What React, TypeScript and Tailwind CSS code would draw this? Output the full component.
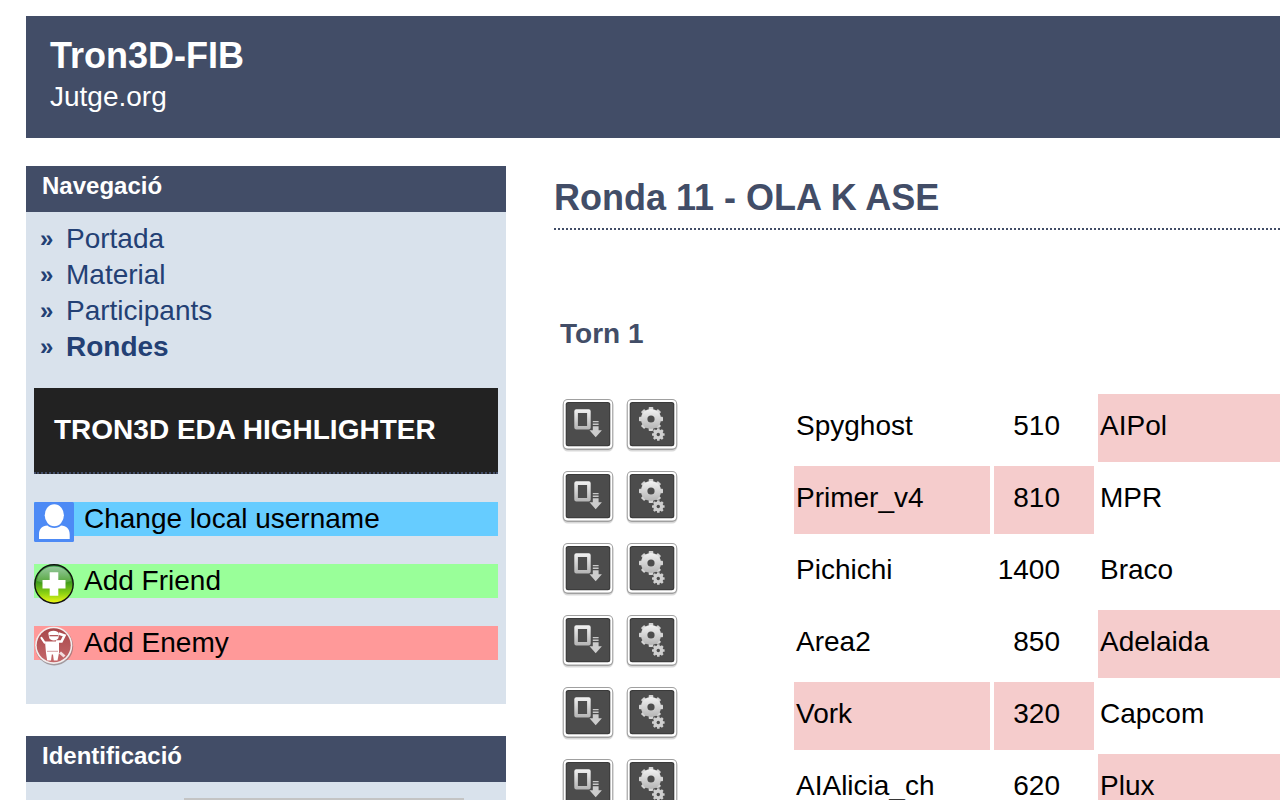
const navigation = [
  { name: "Portada", active: false },
  { name: "Material", active: false },
  { name: "Participants", active: false },
  { name: "Rondes", active: true },
];

const matches = [
  { first: "Spyghost", score: 510, second: "AIPol", winner: 2 },
  { first: "Primer_v4", score: 810, second: "MPR", winner: 1 },
  { first: "Pichichi", score: 1400, second: "Braco", winner: 0 },
  { first: "Area2", score: 850, second: "Adelaida", winner: 2 },
  { first: "Vork", score: 320, second: "Capcom", winner: 1 },
  { first: "AIAlicia_ch", score: 620, second: "Plux", winner: 2 },
];

const teeth = [0, 45, 90, 135];

function IconFrame({ children }: { children: React.ReactNode }) {
  return (
    <svg width="52" height="54" viewBox="0 0 52 54" className="block">
      <defs>
        <linearGradient id="metal" x1="0" y1="0" x2="0" y2="1">
          <stop offset="0" stopColor="#f2f2f2" />
          <stop offset="1" stopColor="#b4b4b4" />
        </linearGradient>
      </defs>
      <rect x="0.5" y="1" width="51" height="51.5" rx="5.500" fill="#b4b4b4" opacity="0.5" />
      <rect x="0.8" y="0" width="50.4" height="51" rx="5" fill="#a0a0a0" />
      <rect x="1.8" y="0.9" width="48.400" height="48.600" rx="4" fill="#fff" />
      <rect x="3.7" y="3" width="44.6" height="44.2" rx="2.5" fill="#3a3a3a" />
      <rect x="4.7" y="4" width="42.6" height="42.2" rx="2" fill="#4c4c4c" />
      {children}
    </svg>
  );
}

function DownloadIcon() {
  return (
    <IconFrame>
      <path
        d="M14.300 10.3h12.400a2 2 0 0 1 2 2v16.200a2 2 0 0 1-2 2h-12.400a2 2 0 0 1-2-2v-16.200a2 2 0 0 1 2-2zM15.900 13.900v13h9.200v-13z"
        fill="url(#metal)"
        fillRule="evenodd"
      />
      <path d="M30.800 22h5.800v1.300h-5.800zM30.800 24.600h5.800v1.300h-5.800z" fill="#c8c8c8" />
      <path d="M30.800 27.200h5.800v4h3.300l-6.200 7-6.200-7h3.300z" fill="#cccccc" />
    </IconFrame>
  );
}

function GearsIcon() {
  return (
    <IconFrame>
      <g transform="translate(25 20)">
        {teeth.map((angle) => (
          <rect
            key={angle}
            x="-2.3"
            y="-12"
            width="4.6"
            height="24"
            rx="0.8"
            fill="#d4d4d4"
            transform={`rotate(${angle})`}
          />
        ))}
        <circle r="10.1" fill="url(#metal)" />
        <circle r="3.6" fill="#4c4c4c" />
      </g>
      <g transform="translate(32.3 35.5)">
        <circle r="6.8" fill="#4c4c4c" />
        {teeth.map((angle) => (
          <rect
            key={angle}
            x="-1.3"
            y="-6.3"
            width="2.6"
            height="12.6"
            rx="0.5"
            fill="#cecece"
            transform={`rotate(${angle})`}
          />
        ))}
        <circle r="5" fill="#cfcfcf" />
        <circle r="1.7" fill="#4c4c4c" />
      </g>
    </IconFrame>
  );
}

function UserIcon() {
  return (
    <svg width="40" height="40" viewBox="0 0 40 40" className="shrink-0">
      <rect width="40" height="40" rx="1.5" fill="#4d8af5" />
      <ellipse cx="20.3" cy="13.2" rx="9.6" ry="11" fill="#fff" />
      <path
        d="M5 37V32.500C5 26.500 8 24 13.500 23.500C16 26.800 24.600 26.800 27 23.500C32.500 24 35.700 26.500 35.700 32.500V37z"
        fill="#fff"
      />
    </svg>
  );
}

function FriendIcon() {
  return (
    <svg width="40" height="40" viewBox="0 0 40 40" className="shrink-0">
      <defs>
        <linearGradient id="lime" x1="0" y1="0" x2="0" y2="1">
          <stop offset="0" stopColor="#2f9440" />
          <stop offset="0.45" stopColor="#3d9a1c" />
          <stop offset="0.75" stopColor="#8fd312" />
          <stop offset="1" stopColor="#f4f916" />
        </linearGradient>
        <linearGradient id="gloss" x1="0" y1="0" x2="0" y2="1">
          <stop offset="0" stopColor="#fff" stopOpacity="0.5" />
          <stop offset="1" stopColor="#fff" stopOpacity="0.1" />
        </linearGradient>
      </defs>
      <circle cx="20" cy="20" r="19.200" fill="url(#lime)" stroke="#111" strokeWidth="1.400" />
      <path d="M3 17C4 7 12 2.500 20 2.500S36 7 37 17C27 21 13 21 3 17z" fill="url(#gloss)" />
      <path d="M15.700 8.300h8.600v7.700h7.200v8.500h-7.200v7.300h-8.600v-7.300h-7.200v-8.500h7.200z" fill="#fff" />
    </svg>
  );
}

function EnemyIcon() {
  return (
    <svg width="40" height="40" viewBox="0 0 40 40" className="shrink-0">
      <defs>
        <linearGradient id="crimson" x1="0" y1="0" x2="0" y2="1">
          <stop offset="0" stopColor="#a8474a" />
          <stop offset="1" stopColor="#c4686a" />
        </linearGradient>
      </defs>
      <circle cx="20.200" cy="20.400" r="19" fill="#7d6a6c" opacity="0.600" />
      <circle cx="19.700" cy="19.300" r="18.600" fill="#f3eeee" />
      <circle cx="19.700" cy="19.300" r="17" fill="url(#crimson)" />
      {/* cap, face and visor */}
      <path d="M14.300 7.500C14.500 3.800 24.500 3.800 24.600 7.500V11C24.600 15.500 15 15.500 15 11z" fill="#fff" />
      <path d="M15.500 9h8.500v1.300h-8.500z" fill="#b4585a" />
      {/* saluting arm */}
      <path d="M24.500 7.500L30.500 9.500L27.500 15.500H22" fill="none" stroke="#fff" strokeWidth="2.600" />
      {/* raised arm on the other side */}
      <path d="M7.500 12L10.500 16.500" fill="none" stroke="#fff" strokeWidth="2.200" strokeLinecap="round" />
      {/* torso and legs */}
      <path d="M11 15.500H25V27L23.500 34.500H19.800L19 28.500H17.800L17 34.500H13.200L12 27z" fill="#fff" />
      <path d="M13 25.300h11" stroke="#c98789" strokeWidth="0.800" />
      <path d="M26 26.500l4.500 4" stroke="#f2dede" strokeWidth="3" />
    </svg>
  );
}

function PanelTitle({ id, title }: { id: string; title: string }) {
  return (
    <h2 id={id} className="bg-[#424d67] text-white text-2xl font-bold leading-10 pl-4 pb-[6px]">
      {title}
    </h2>
  );
}

function Sidebar() {
  return (
    <aside className="w-[480px] shrink-0 space-y-8">
      <section className="bg-[#d9e2ec]">
        <PanelTitle id="navegacio" title="Navegació" />
        <div className="px-2 pt-[9px] pb-11">
          <ul className="pl-[6px] text-[#234074]">
            {navigation.map((item) => (
              <li key={item.name} className="flex leading-9">
                <span className="w-[26px] text-2xl leading-9 font-bold">»</span>
                <a href="#" className={item.active ? "font-bold" : ""}>
                  {item.name}
                </a>
              </li>
            ))}
          </ul>
          <h3 className="mt-[23px] mb-7 px-5 py-6 leading-9 font-bold text-white bg-[#222] border-b-2 border-dotted border-[#424d67]">
            TRON3D EDA HIGHLIGHTER
          </h3>
          <div className="space-y-7">
            <button className="flex items-start gap-[10px] w-full h-[34px] leading-[34px] bg-[#66ccff]">
              <UserIcon />
              Change local username
            </button>
            <button className="flex items-start gap-[10px] w-full h-[34px] leading-[34px] bg-[#99ff99]">
              <FriendIcon />
              Add Friend
            </button>
            <button className="flex items-start gap-[10px] w-full h-[34px] leading-[34px] bg-[#ff9999]">
              <EnemyIcon />
              Add Enemy
            </button>
          </div>
        </div>
      </section>

      <section className="bg-[#d9e2ec]">
        <PanelTitle id="identificacio" title="Identificació" />
        <div className="flex justify-end pt-4 pb-8 pr-[42px]">
          <input
            type="text"
            aria-labelledby="identificacio"
            className="w-[280px] h-11 bg-white border-2 border-[#c4c4c4]"
          />
        </div>
      </section>
    </aside>
  );
}

function Round() {
  return (
    <main className="flex-1 min-w-0">
      <h1 className="pt-[11px] pb-[9px] text-4xl leading-[42px] font-bold text-[#424d67] border-b-2 border-dotted border-[#424d67]">
        Ronda 11 - OLA K ASE
      </h1>
      <h2 className="mt-[86px] mb-[38px] pl-[6px] leading-9 font-bold text-[#424d67]">Torn 1</h2>
      <div className="-mr-1">
        <table className="w-full table-fixed border-separate border-spacing-1">
          <colgroup>
            <col className="w-[232px]" />
            <col className="w-[196px]" />
            <col className="w-[100px]" />
            <col />
          </colgroup>
          <tbody>
            {matches.map((match) => (
              <tr key={match.first} className="h-[68px]">
                <td className="pl-1 pb-1">
                  <div className="flex gap-3">
                    <button aria-label="Baixa">
                      <DownloadIcon />
                    </button>
                    <button aria-label="Executa">
                      <GearsIcon />
                    </button>
                  </div>
                </td>
                <td className={match.winner === 1 ? "px-[2px] pb-1 bg-[#f5cccc]" : "px-[2px] pb-1"}>
                  {match.first}
                </td>
                <td
                  className={
                    match.winner === 1
                      ? "pr-[34px] pb-1 text-right bg-[#f5cccc]"
                      : "pr-[34px] pb-1 text-right"
                  }
                >
                  {match.score}
                </td>
                <td className={match.winner === 2 ? "px-[2px] pb-1 bg-[#f5cccc]" : "px-[2px] pb-1"}>
                  {match.second}
                </td>
              </tr>
            ))}
          </tbody>
        </table>
      </div>
    </main>
  );
}

function App() {
  return (
    <div className="h-screen overflow-hidden bg-white pl-[26px] pt-4 font-['Liberation_Sans',Arial,sans-serif] text-[28px] leading-9 text-black">
      <header className="bg-[#424d67] text-white px-6 pt-[18px] pb-[23px]">
        <p className="text-4xl leading-[44px] font-bold">Tron3D-FIB</p>
        <p className="pt-px">Jutge.org</p>
      </header>
      <div className="flex gap-12 mt-7">
        <Sidebar />
        <Round />
      </div>
    </div>
  );
}

export default App;
